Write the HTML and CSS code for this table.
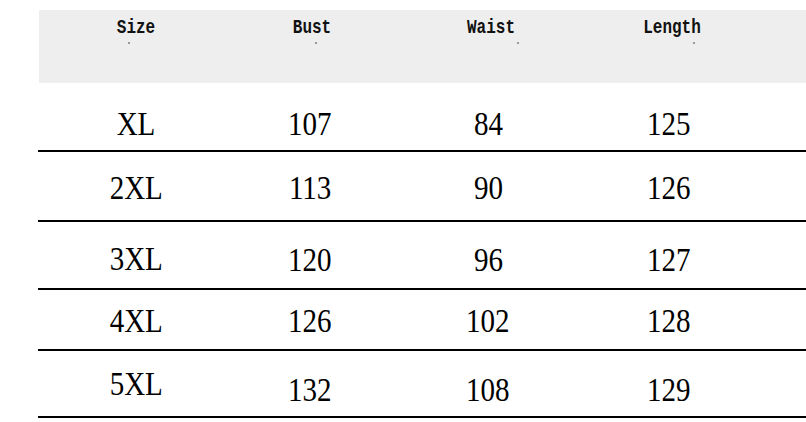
FILE: index.html
```html
<!DOCTYPE html>
<html>
<head>
<meta charset="utf-8">
<link rel="stylesheet" href="styles.css">
</head>
<body>
<div class="chart">
  <div class="head">
    <div class="hcell"><span class="htext">Size</span><span class="dot d1"></span></div>
    <div class="hcell"><span class="htext">Bust</span><span class="dot d2"></span></div>
    <div class="hcell"><span class="htext">Waist</span><span class="dot d3"></span></div>
    <div class="hcell"><span class="htext">Length</span><span class="dot d4"></span></div>
  </div>
  <div class="row r1">
    <div class="cell"><span class="v">XL</span></div>
    <div class="cell"><span class="v">107</span></div>
    <div class="cell"><span class="v">84</span></div>
    <div class="cell"><span class="v">125</span></div>
  </div>
  <div class="row r2">
    <div class="cell"><span class="v">2XL</span></div>
    <div class="cell"><span class="v">113</span></div>
    <div class="cell"><span class="v">90</span></div>
    <div class="cell"><span class="v">126</span></div>
  </div>
  <div class="row r3">
    <div class="cell size"><span class="v">3XL</span></div>
    <div class="cell"><span class="v">120</span></div>
    <div class="cell"><span class="v">96</span></div>
    <div class="cell"><span class="v">127</span></div>
  </div>
  <div class="row r4">
    <div class="cell"><span class="v">4XL</span></div>
    <div class="cell"><span class="v">126</span></div>
    <div class="cell"><span class="v">102</span></div>
    <div class="cell"><span class="v">128</span></div>
  </div>
  <div class="row r5">
    <div class="cell size"><span class="v">5XL</span></div>
    <div class="cell"><span class="v">132</span></div>
    <div class="cell"><span class="v">108</span></div>
    <div class="cell"><span class="v">129</span></div>
  </div>
</div>
</body>
</html>
```

FILE: styles.css
```css
html, body {
  margin: 0;
  padding: 0;
  background: #ffffff;
}

.chart {
  padding-top: 10px;
  margin-left: 38px;
  width: 768px;
}

.head {
  display: grid;
  grid-template-columns: 196px 152px 204px 158px;
  height: 73px;
  margin-left: 1px;
  background: #eeeeee;
  box-sizing: border-box;
  padding-top: 10px;
}

.hcell {
  display: flex;
  flex-direction: column;
  align-items: center;
}

.hcell:nth-child(1) { margin-left: -2px; }
.hcell:nth-child(2) { margin-left: 2px; }
.hcell:nth-child(3) { margin-left: 4px; }
.hcell:nth-child(4) { margin-left: 4px; }

.htext {
  font-family: "Liberation Mono", "DejaVu Sans Mono", monospace;
  font-weight: bold;
  font-size: 16px;
  line-height: 16px;
  color: #111;
  display: inline-block;
  transform: scaleY(1.3);
}

.dot {
  width: 2px;
  height: 2px;
  background: #999;
  margin-top: 6px;
}
.d1 { margin-left: -14px; }
.d2 { margin-left: 8px; }
.d3 { margin-left: 54px; }
.d4 { margin-left: 44px; }

.row {
  display: grid;
  grid-template-columns: 196px 152px 204px 158px;
  align-items: end;
  border-bottom: 2px solid #000;
  box-sizing: content-box;
}

.r1 { height: 58px; padding-bottom: 9px; }
.r2 { height: 53px; padding-bottom: 15px; }
.r3 { height: 55px; padding-bottom: 11px; }
.r4 { height: 48px; padding-bottom: 11px; }
.r5 { height: 56px; padding-bottom: 9px; }

.r3 .size { padding-bottom: 1px; }
.r5 .size { padding-bottom: 6px; }

.cell {
  display: flex;
  justify-content: center;
}

.v {
  display: inline-block;
  font-family: "Liberation Serif", "Times New Roman", serif;
  font-size: 33px;
  line-height: 33px;
  color: #000;
  transform: scaleX(0.88);
}
```
